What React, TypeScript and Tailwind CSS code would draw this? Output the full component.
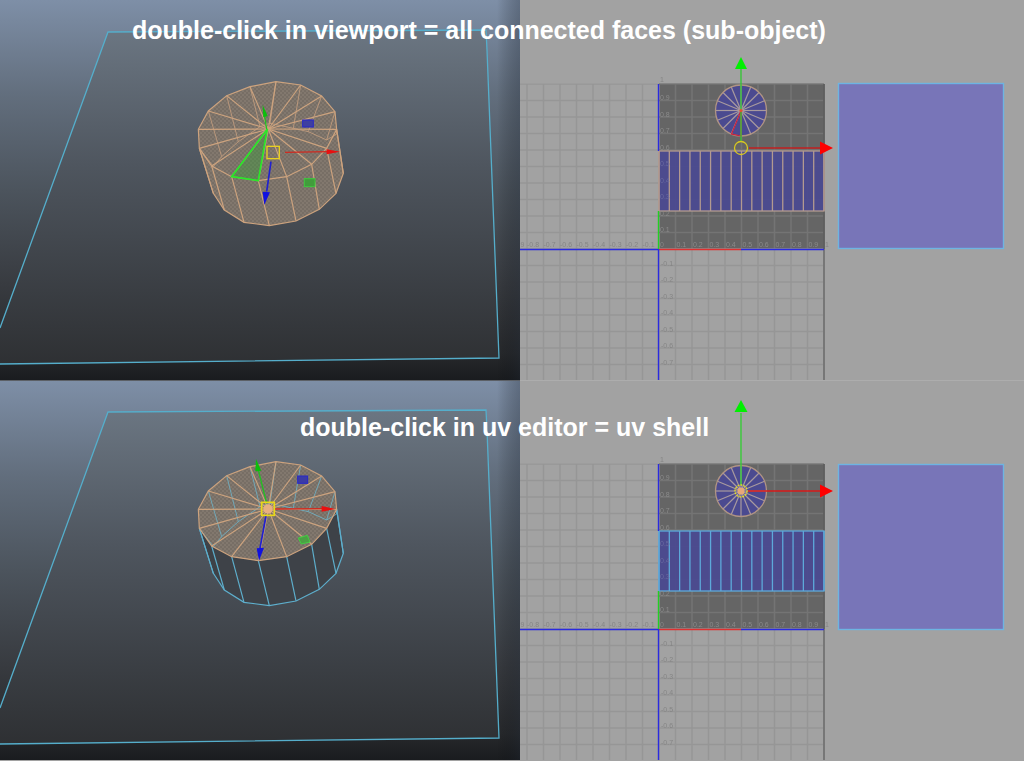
import React from 'react';

type Pt = [number, number];

// cylinder verts, in 3x zoomed units (scaled back down by the group transform)
const TOP_RING: Pt[] = [
  [85, 208], [88, 265], [125, 318], [185, 350], [265, 362], [350, 350], [425, 313], [470, 265],
  [500, 208], [495, 155], [455, 108], [392, 75], [318, 65], [240, 80], [170, 107], [115, 153],
];
const FRONT_BOTTOM: Pt[] = [
  [130, 400], [163, 450], [222, 487], [298, 497], [378, 483], [448, 448], [498, 400], [520, 340],
];
const HIDDEN: Pt[] = [
  [130, 320], [155, 290], [205, 245], [270, 200], [300, 190], [370, 205], [415, 215], [470, 240], [500, 222],
];
const HIDDEN_TOP = [TOP_RING[1], TOP_RING[15], TOP_RING[14], TOP_RING[13], TOP_RING[12], TOP_RING[11], TOP_RING[10], TOP_RING[9], TOP_RING[8]];
const CENTER: Pt = [295, 207];

const pts = (list: Pt[]) => list.map((p) => p.join(',')).join(' ');

const SILHOUETTE: Pt[] = [
  TOP_RING[0], TOP_RING[1], ...FRONT_BOTTOM, TOP_RING[8], TOP_RING[9], TOP_RING[10], TOP_RING[11],
  TOP_RING[12], TOP_RING[13], TOP_RING[14], TOP_RING[15],
];

function Cylinder({ shell, id }: { shell: boolean; id: string }) {
  const sideLine = shell ? '#5eafcd' : '#cda37e';
  const capLine = '#cda37e';
  const hiddenLine = shell ? '#6fb2c6' : '#c49e7e';
  return (
    <g transform="translate(170 60) scale(0.3333)" className="blur-[0.35px]">
      <defs>
        <pattern id={`hatch-${id}`} width="12" height="12" patternUnits="userSpaceOnUse">
          <rect width="12" height="12" fill="#82786e" />
          <rect width="6" height="6" fill="#776e65" />
          <rect x="6" y="6" width="6" height="6" fill="#776e65" />
        </pattern>
      </defs>
      {shell ? (
        <polygon points={pts(SILHOUETTE)} fill="#3e4248" />
      ) : (
        <polygon points={pts(SILHOUETTE)} fill={`url(#hatch-${id})`} />
      )}
      <polygon points={pts(TOP_RING)} fill={`url(#hatch-${id})`} />

      {/* edges seen through the cap */}
      <polyline points={pts(HIDDEN)} fill="none" stroke={hiddenLine} strokeWidth="3" opacity="0.85" />
      {HIDDEN.map((p, i) => (
        <line key={i} x1={HIDDEN_TOP[i][0]} y1={HIDDEN_TOP[i][1]} x2={p[0]} y2={p[1]} stroke={hiddenLine} strokeWidth="3" opacity="0.85" />
      ))}

      {/* side walls */}
      {FRONT_BOTTOM.map((p, i) => (
        <line key={i} x1={TOP_RING[i + 1][0]} y1={TOP_RING[i + 1][1]} x2={p[0]} y2={p[1]} stroke={sideLine} strokeWidth="3.5" />
      ))}
      <polyline points={pts([TOP_RING[1], ...FRONT_BOTTOM, TOP_RING[8]])} fill="none" stroke={sideLine} strokeWidth="3.5" />

      {/* cap */}
      {TOP_RING.map((p, i) => (
        <line key={i} x1={CENTER[0]} y1={CENTER[1]} x2={p[0]} y2={p[1]} stroke={capLine} strokeWidth="3.5" />
      ))}
      <polygon points={pts(TOP_RING)} fill="none" stroke={capLine} strokeWidth="3.5" />

      {shell ? (
        <g>
          <line x1="290" y1="190" x2="265" y2="90" stroke="#22c022" strokeWidth="4" />
          <polygon points="258,57 274,92 256,94" fill="#0bbf0b" />
          <line x1="315" y1="207" x2="460" y2="206" stroke="#d02a20" strokeWidth="4" />
          <polygon points="455,198 497,207 455,215" fill="#e81010" />
          <line x1="288" y1="228" x2="270" y2="325" stroke="#2020d0" strokeWidth="5" />
          <polygon points="260,325 282,323 267,362" fill="#1010e0" />
          <rect x="383" y="108" width="30" height="22" fill="#3b3ba6" stroke="#2828c8" strokeWidth="3" />
          <polygon points="385,294 412,286 420,306 394,312" fill="#4ca044" stroke="#40d040" strokeWidth="3" />
          <circle cx="294" cy="207" r="14" fill="#e8b080" />
          <rect x="275" y="187" width="38" height="39" fill="none" stroke="#e8d818" strokeWidth="5" />
        </g>
      ) : (
        <g>
          <polygon points="292,207 185,350 265,362" fill="#3f9a3f" fillOpacity="0.45" stroke="#28e828" strokeWidth="5" />
          <line x1="290" y1="207" x2="283" y2="165" stroke="#22c022" strokeWidth="4" />
          <polygon points="278,135 293,168 280,172" fill="#0bbf0b" />
          <line x1="345" y1="277" x2="475" y2="275" stroke="#d02a20" strokeWidth="4" />
          <polygon points="470,268 510,275 470,283" fill="#e81010" />
          <line x1="303" y1="305" x2="290" y2="395" stroke="#2020d0" strokeWidth="5" />
          <polygon points="278,395 300,397 283,434" fill="#1010e0" />
          <rect x="398" y="180" width="32" height="21" fill="#3f3fa0" stroke="#2828c8" strokeWidth="3" />
          <rect x="403" y="356" width="32" height="24" fill="#429c3c" stroke="#3cc83c" strokeWidth="3" />
          <rect x="291" y="259" width="37" height="37" fill="none" stroke="#e8d020" strokeWidth="4" />
        </g>
      )}
    </g>
  );
}

function Viewport({ shell }: { shell: boolean }) {
  const id = shell ? 'b' : 'a';
  return (
    <svg viewBox="0 0 520 380" className="block h-[380px] w-[520px] shrink-0">
      <defs>
        <linearGradient id={`sky-${id}`} x1="0" y1="0" x2="0" y2="1">
          <stop offset="0" stopColor="#7e8fa7" />
          <stop offset="0.25" stopColor="#626e7d" />
          <stop offset="0.5" stopColor="#4c545d" />
          <stop offset="0.75" stopColor="#383b40" />
          <stop offset="0.93" stopColor="#27292c" />
          <stop offset="1" stopColor="#1a1c1f" />
        </linearGradient>
        <linearGradient id={`plane-${id}`} x1="0" y1="0" x2="0" y2="1">
          <stop offset="0" stopColor="#6b7682" />
          <stop offset="0.4" stopColor="#4f565f" />
          <stop offset="1" stopColor="#2e3033" />
        </linearGradient>
        <linearGradient id={`edge-${id}`} x1="0" y1="0" x2="1" y2="0">
          <stop offset="0" stopColor="#000" stopOpacity="0" />
          <stop offset="1" stopColor="#1c2430" stopOpacity="0.32" />
        </linearGradient>
      </defs>
      <rect width="520" height="380" fill={`url(#sky-${id})`} />
      <polygon points="108,32 486,30 487,50 499,358 0,364 0,328" fill={`url(#plane-${id})`} />
      <polyline points="0,328 108,32 486,30 487,50 499,358 0,364" fill="none" stroke="#55aecb" strokeWidth="1.3" />
      <rect x="497" width="23" height="380" fill={`url(#edge-${id})`} />
      <Cylinder shell={shell} id={id} />
      {shell && <rect width="520" height="1" fill="#5c6066" />}
    </svg>
  );
}

const STEP = 16.5;
const TICKS = [1, 2, 3, 4, 5, 6, 7, 8, 9];
const LINE_X = Array.from({ length: 19 }, (_, i) => 659 + (i - 8) * STEP);
const LINE_Y = Array.from({ length: 18 }, (_, i) => 84 + i * STEP);

function UvEditor({ shell }: { shell: boolean }) {
  const bandLine = shell ? '#5da9da' : '#b39a90';
  const spokes = Array.from({ length: 16 }, (_, i) => (i * Math.PI) / 8);
  const hubY = shell ? 111 : 110.5;
  return (
    <svg viewBox="520 0 504 380" className="block h-[380px] flex-1 bg-[#a2a2a2]">
      <g className="blur-[0.3px]">
        {shell && <rect x="520" width="504" height="1" fill="#adadad" />}
        <rect x="520" y="83" width="304" height="1" fill="#b4b4b4" />
        <rect x="659" y="84" width="165" height="165" fill="#656565" />

        {/* grid */}
        {LINE_X.map((x) => (
          <g key={x}>
            <line x1={x} y1="84" x2={x} y2="249" stroke={x > 659 ? '#747474' : '#969696'} strokeWidth="1.5" />
            <line x1={x} y1="249" x2={x} y2="380" stroke="#969696" strokeWidth="1.5" />
          </g>
        ))}
        {LINE_Y.map((y) => (
          <g key={y}>
            <line x1="520" y1={y} x2="659" y2={y} stroke="#969696" strokeWidth="1.5" />
            <line x1="659" y1={y} x2="824" y2={y} stroke={y < 249 ? '#747474' : '#969696'} strokeWidth="1.5" />
          </g>
        ))}
        <line x1="824" y1="84" x2="824" y2="249" stroke="#5a5a5a" strokeWidth="1.5" />
        <line x1="824" y1="249" x2="824" y2="380" stroke="#6c6c6c" strokeWidth="1.5" />

        {/* shell fills */}
        <rect x="659" y="151" width="165" height="60" fill="#4b4a90" fillOpacity="0.97" />
        {Array.from({ length: 17 }, (_, i) => (
          <line key={i} x1={659 + i * (165 / 16)} y1="151" x2={659 + i * (165 / 16)} y2="211" stroke={bandLine} strokeWidth="1.3" />
        ))}
        <rect x="659" y="151" width="165" height="60" fill="none" stroke={bandLine} strokeWidth="1.3" />
        <circle cx="741" cy={hubY} r="25.5" fill="#4b4a90" />
        {spokes.map((a, i) => (
          <line key={i} x1="741" y1={hubY} x2={741 + 25.5 * Math.cos(a)} y2={hubY + 25.5 * Math.sin(a)} stroke="#a89a9e" strokeWidth="1.2" />
        ))}
        <circle cx="741" cy={hubY} r="25.5" fill="none" stroke="#b09484" strokeWidth="1.3" />

        {/* axes */}
        <line x1="520" y1="249.5" x2="659" y2="249.5" stroke="#2a2ae0" strokeWidth="1.5" />
        <line x1="741" y1="249.5" x2="824" y2="249.5" stroke="#2a2ae0" strokeWidth="1.5" />
        <line x1="659" y1="249.5" x2="741" y2="249.5" stroke="#e03030" strokeWidth="1.5" />
        <line x1="658.5" y1="84" x2="658.5" y2="151" stroke="#2a2ae0" strokeWidth="1.4" />
        <line x1="658.5" y1="211" x2="658.5" y2="249" stroke="#22d022" strokeWidth="1.4" />
        <line x1="658.5" y1="249" x2="658.5" y2="380" stroke="#2a2ae0" strokeWidth="1.4" />

        {/* tick labels */}
        <g fontFamily="'Liberation Sans', sans-serif" fontSize="7" fill="#858585">
          <text x="660" y="82">1</text>
          <text x="660" y="247">0</text>
          <text x="825" y="247">1</text>
          {TICKS.map((t) => (
            <g key={t}>
              <text x={660} y={248.5 - t * STEP} fill={t > 2 && t < 6 ? '#6a6aa0' : '#8a8a8a'}>{`0.${t}`}</text>
              <text x={660 + t * STEP} y={247} fill="#8a8a8a">{`0.${t}`}</text>
              {t < 9 && <text x={665 - t * STEP} y={247} textAnchor="middle">{`-0.${t}`}</text>}
              {t < 8 && <text x={661} y={249 + t * STEP}>{`-0.${t}`}</text>}
            </g>
          ))}
          <text x="520.5" y="247">9</text>
        </g>

        {/* manipulator */}
        {shell ? (
          <g>
            <line x1="741" y1="105" x2="741" y2="33" stroke="#30d030" strokeWidth="1.3" />
            <polygon points="741,20 747.5,32 734.5,32" fill="#00f000" />
            <line x1="748" y1="111" x2="821" y2="111" stroke="#d81818" strokeWidth="1.3" />
            <polygon points="820,104.5 833,111 820,117.5" fill="#ff0000" />
            <circle cx="741" cy="111" r="3.5" fill="#e8a878" />
            <circle cx="741" cy="111" r="6" fill="none" stroke="#e8e020" strokeWidth="1.3" strokeDasharray="2 1" />
          </g>
        ) : (
          <g>
            <polygon points="741,110.5 731.5,134 741,136" fill="none" stroke="#c8203c" strokeWidth="1.2" />
            <line x1="741" y1="141" x2="741" y2="68" stroke="#30c830" strokeWidth="1.3" />
            <polygon points="741,57 747,69 735,69" fill="#00f000" />
            <line x1="749" y1="148" x2="821" y2="148" stroke="#c02020" strokeWidth="1.3" />
            <polygon points="820,141.5 833,148 820,154.5" fill="#ff0000" />
            <circle cx="741" cy="148" r="6.5" fill="none" stroke="#d8c820" strokeWidth="1.3" />
            <circle cx="741" cy="110.5" r="1.6" fill="#e85030" />
          </g>
        )}
      </g>

      {/* texture swatch */}
      <rect x="838.5" y={shell ? 84.5 : 83.5} width="165" height="165" fill="#7875b8" stroke="#6db4e2" strokeWidth="1.4" />
    </svg>
  );
}

export default function App() {
  return (
    <div className="flex h-[761px] w-[1024px] flex-col overflow-hidden bg-[#a2a2a2] font-['Liberation_Sans',sans-serif]">
      <div className="relative flex h-[380px] shrink-0">
        <Viewport shell={false} />
        <UvEditor shell={false} />
        <div className="absolute left-[132px] top-[16px] whitespace-nowrap text-[25px] font-bold leading-7 text-white">
          double-click in viewport = all connected faces (sub-object)
        </div>
      </div>
      <div className="relative flex h-[381px] shrink-0">
        <Viewport shell={true} />
        <UvEditor shell={true} />
        <div className="absolute left-[300px] top-[33px] whitespace-nowrap text-[25px] font-bold leading-7 text-white">
          double-click in uv editor = uv shell
        </div>
      </div>
    </div>
  );
}
